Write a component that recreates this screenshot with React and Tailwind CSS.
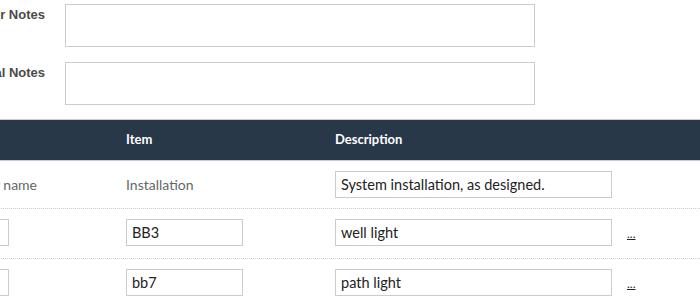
import React from 'react';

const rows = [
  { name: '', item: 'BB3', description: 'well light' },
  { name: '', item: 'bb7', description: 'path light' },
];

const App = () => {
  return (
    <div className="w-[700px] h-[299px] overflow-hidden bg-white">
      <div className="w-[820px] -ml-[120px]">
        {/* Notes fields */}
        <div className="flex flex-col gap-[15px] pt-[4px] pb-[14px]">
          {['Customer Notes', 'Internal Notes'].map((label) => (
            <div key={label} className="flex items-start gap-[20px]">
              <label className="w-[165px] text-right pt-[1px] text-[13px] font-bold text-[#4a4a4a] font-['Liberation_Sans',Arial,sans-serif]">
                {label}
              </label>
              <textarea className="w-[470px] h-[43px] border border-[#cccccc] resize-none outline-none" />
            </div>
          ))}
        </div>

        {/* Line items table */}
        <div className="font-['Lato',sans-serif] text-[14px]">
          <div className="flex items-center h-[42px] bg-[#283849] border-y border-[#cccccc] text-white text-[13px] font-bold">
            <div className="w-[246px] pl-[60px]">Name</div>
            <div className="w-[209px]">Item</div>
            <div className="w-[292px]">Description</div>
            <div className="flex-1" />
          </div>

          <div className="flex items-center h-[48px] border-b border-dotted border-[#cccccc] text-[#666666]">
            <div className="w-[246px] pl-[60px]">Customer name</div>
            <div className="w-[209px]">Installation</div>
            <div className="w-[292px]">
              <input
                readOnly
                value="System installation, as designed."
                className="w-[277px] h-[27px] px-[5px] border border-[#cccccc] text-[14.5px] text-[#222222] outline-none"
              />
            </div>
            <div className="flex-1" />
          </div>

          {rows.map((row) => (
            <div
              key={row.item}
              className="flex items-baseline h-[50px] pt-[10px] border-b border-dotted border-[#cccccc]"
            >
              <div className="w-[246px] pl-[40px]">
                <input
                  readOnly
                  value={row.name}
                  className="w-[89px] h-[27px] px-[5px] border border-[#cccccc] outline-none"
                />
              </div>
              <div className="w-[209px]">
                <input
                  readOnly
                  value={row.item}
                  className="w-[117px] h-[27px] px-[5px] border border-[#cccccc] text-[14.5px] text-[#222222] outline-none"
                />
              </div>
              <div className="w-[292px]">
                <input
                  readOnly
                  value={row.description}
                  className="w-[277px] h-[27px] px-[5px] border border-[#cccccc] text-[14.5px] text-[#222222] outline-none"
                />
              </div>
              <a href="#" className="text-[12px] text-[#222222] underline">
                ...
              </a>
            </div>
          ))}
        </div>
      </div>
    </div>
  );
};

export default App;
